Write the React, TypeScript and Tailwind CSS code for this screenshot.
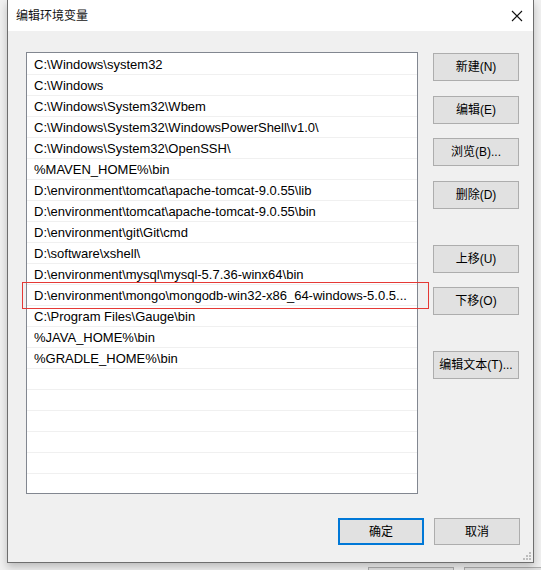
import React from "react";

const rows: string[] = [
  "C:\\Windows\\system32",
  "C:\\Windows",
  "C:\\Windows\\System32\\Wbem",
  "C:\\Windows\\System32\\WindowsPowerShell\\v1.0\\",
  "C:\\Windows\\System32\\OpenSSH\\",
  "%MAVEN_HOME%\\bin",
  "D:\\environment\\tomcat\\apache-tomcat-9.0.55\\lib",
  "D:\\environment\\tomcat\\apache-tomcat-9.0.55\\bin",
  "D:\\environment\\git\\Git\\cmd",
  "D:\\software\\xshell\\",
  "D:\\environment\\mysql\\mysql-5.7.36-winx64\\bin",
  "D:\\environment\\mongo\\mongodb-win32-x86_64-windows-5.0.5...",
  "C:\\Program Files\\Gauge\\bin",
  "%JAVA_HOME%\\bin",
  "%GRADLE_HOME%\\bin",
];

const allRows = [...rows, ...Array.from({ length: 7 }, () => "")];

function Btn({ label, className = "" }: { label: string; className?: string }) {
  return (
    <div
      className={`w-[86px] h-[28px] bg-[#e1e1e1] border border-[#adadad] flex items-center justify-center text-[12px] text-black ${className}`}
    >
      {label}
    </div>
  );
}

function LeftStripRow({ t, sel = false }: { t: string; sel?: boolean }) {
  return (
    <div className={`h-[21px] flex items-center whitespace-nowrap text-[12px] ${sel ? "bg-[#e5e5e5]" : "bg-white"}`}>
      {t}
    </div>
  );
}

export default function App() {
  return (
    <div className="relative w-[541px] h-[570px] overflow-hidden bg-[#f0f0f0] font-['Liberation_Sans','Noto_Sans_CJK_SC',sans-serif] text-black">
      {/* background window */}
      <div className="flex w-full h-full">
        <div className="w-[7px] h-full overflow-hidden flex flex-col bg-[#f0f0f0]">
          <div className="h-[36px] flex items-center whitespace-nowrap text-[12px] -ml-[1px] text-[#333]">er</div>
          <div className="border-t border-b border-[#a0a0a0] h-[165px] bg-white flex flex-col pt-[1px]">
            <LeftStripRow t="变量" />
            <LeftStripRow t="nvm" sel />
            <LeftStripRow t="OneDrive" />
            <LeftStripRow t="Path" />
            <LeftStripRow t="TEMP" />
            <LeftStripRow t="TMP" />
          </div>
          <div className="h-[73px] border-b border-[#d0d0d0]" />
          <div className="h-[34px] flex items-center whitespace-nowrap text-[12px]">统</div>
          <div className="border-t border-b border-[#a0a0a0] h-[169px] bg-white flex flex-col pt-[4px]">
            <LeftStripRow t="变量" />
            <LeftStripRow t="NUMBER" />
            <LeftStripRow t="OS" />
            <LeftStripRow t="Path" sel />
            <LeftStripRow t="PATHEXT" />
            <LeftStripRow t="PROCESSOR" />
            <LeftStripRow t="PROCESSOR" />
            <LeftStripRow t="PROCESSOR" />
          </div>
          <div className="h-[51px] border-b border-[#d0d0d0]" />
        </div>
        <div className="flex-1 flex flex-col justify-end">
          <div className="flex gap-[10px] pl-[368px] h-[3px]">
            <div className="w-[86px] h-[10px] bg-[#e1e1e1] border border-[#adadad]" />
            <div className="w-[86px] h-[10px] bg-[#e1e1e1] border border-[#adadad]" />
          </div>
        </div>
        <div className="w-[8px] h-full flex flex-col bg-[#f0f0f0]">
          <div className="h-[27px] border-b border-[#a8a8a8] bg-[#f3f3f3]" />
          <div className="h-[8px]" />
          <div className="h-[46px] ml-[2px] border-l border-[#c8c8c8]" />
          <div className="h-[128px] border-b border-[#a8a8a8]" />
          <div className="h-[18px] border-b border-[#c0c0c0] bg-[#e8e8e8]" />
          <div className="h-[27px] border-b border-[#c0c0c0]" />
        </div>
      </div>

      {/* dialog */}
      <div className="absolute left-[7px] top-0 w-[527px] h-[563px] border-l border-r border-b border-[#6e6e6e] bg-[#f0f0f0] flex flex-col shadow-[0_4px_8px_rgba(0,0,0,0.22)]">
        <div className="h-[31px] bg-white flex items-center justify-between pl-[8px] pr-[10px] shrink-0">
          <span className="text-[12px] text-[#111]">编辑环境变量</span>
          <svg width="12" height="12" viewBox="0 0 12 12">
            <path d="M1 1 L11 11 M11 1 L1 11" stroke="#111" strokeWidth="1.1" fill="none" />
          </svg>
        </div>
        <div className="flex-1 flex flex-col pl-[18px] pr-[13px] pt-[21px] relative">
          <div className="flex">
            <div className="relative">
              <div className="w-[392px] h-[442px] bg-white border border-[#828790] overflow-hidden pt-[1px]">
                {allRows.map((r, i) => (
                  <div
                    key={i}
                    className="h-[21px] border-b border-[#f0f0f0] flex items-center pl-[7px] pt-[1px] text-[13px] whitespace-nowrap overflow-hidden"
                  >
                    {r}
                  </div>
                ))}
              </div>
              <div className="absolute left-[-4px] top-[230px] w-[407px] h-[27px] border border-[#e53935]" />
            </div>
            <div className="ml-[15px] flex flex-col">
              <Btn label="新建(N)" className="mt-[1px]" />
              <Btn label="编辑(E)" className="mt-[15px]" />
              <Btn label="浏览(B)..." className="mt-[14px]" />
              <Btn label="删除(D)" className="mt-[15px]" />
              <Btn label="上移(U)" className="mt-[36px]" />
              <Btn label="下移(O)" className="mt-[14px]" />
              <Btn label="编辑文本(T)..." className="mt-[36px]" />
            </div>
          </div>
          <div className="flex justify-end gap-[10px] mt-[24px]">
            <div className="w-[86px] h-[27px] bg-[#e1e1e1] border-2 border-[#0078d7] flex items-center justify-center text-[12px]">
              确定
            </div>
            <div className="w-[86px] h-[27px] bg-[#e1e1e1] border border-[#adadad] flex items-center justify-center text-[12px]">
              取消
            </div>
          </div>
          <svg className="absolute right-[1px] bottom-[1px]" width="10" height="10" viewBox="0 0 10 10">
            <rect x="7" y="1" width="2" height="2" fill="#bdbdbd" />
            <rect x="4" y="4" width="2" height="2" fill="#bdbdbd" />
            <rect x="7" y="4" width="2" height="2" fill="#bdbdbd" />
            <rect x="1" y="7" width="2" height="2" fill="#bdbdbd" />
            <rect x="4" y="7" width="2" height="2" fill="#bdbdbd" />
            <rect x="7" y="7" width="2" height="2" fill="#bdbdbd" />
          </svg>
        </div>
      </div>
    </div>
  );
}
